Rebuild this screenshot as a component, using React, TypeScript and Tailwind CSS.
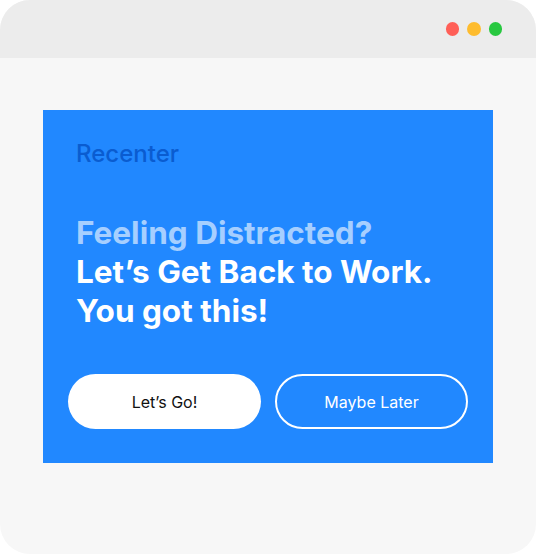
import React from "react";

export default function App() {
  return (
    <div className="w-[536px] h-[554px] bg-white" style={{ fontFamily: "Inter, 'Noto Sans', sans-serif" }}>
      <div className="w-[536px] h-[554px] rounded-[30px] bg-[#f7f7f7] overflow-hidden flex flex-col">
        <div className="h-[58px] bg-[#ececec] flex items-center justify-end pr-[34px] gap-[8px] shrink-0">
          <span className="block w-[13.5px] h-[13.5px] rounded-full bg-[#ff5f57]" />
          <span className="block w-[13.5px] h-[13.5px] rounded-full bg-[#febc2e]" />
          <span className="block w-[13.5px] h-[13.5px] rounded-full bg-[#28c840]" />
        </div>
        <div className="pt-[52px] pl-[43px]">
          <div className="w-[450px] h-[353px] bg-[#2188ff] flex flex-col px-[33px] pt-[32px]">
            <div className="text-[24px] leading-[24px] font-medium text-[#0a5cd0]">Recenter</div>
            <div className="mt-[47px] text-[31.5px] leading-[39px] font-bold tracking-[0px]">
              <div className="text-[#a6cfff]">Feeling Distracted?</div>
              <div className="text-white">Let’s Get Back to Work.</div>
              <div className="text-white">You got this!</div>
            </div>
            <div className="mt-[44px] -mx-[8px] grid grid-cols-2 gap-[14px]">
              <button className="h-[55px] rounded-full bg-white text-[#111] text-[16px] font-normal">Let’s Go!</button>
              <button className="h-[55px] rounded-full border-2 border-white text-white text-[16px] font-normal">Maybe Later</button>
            </div>
          </div>
        </div>
      </div>
    </div>
  );
}
